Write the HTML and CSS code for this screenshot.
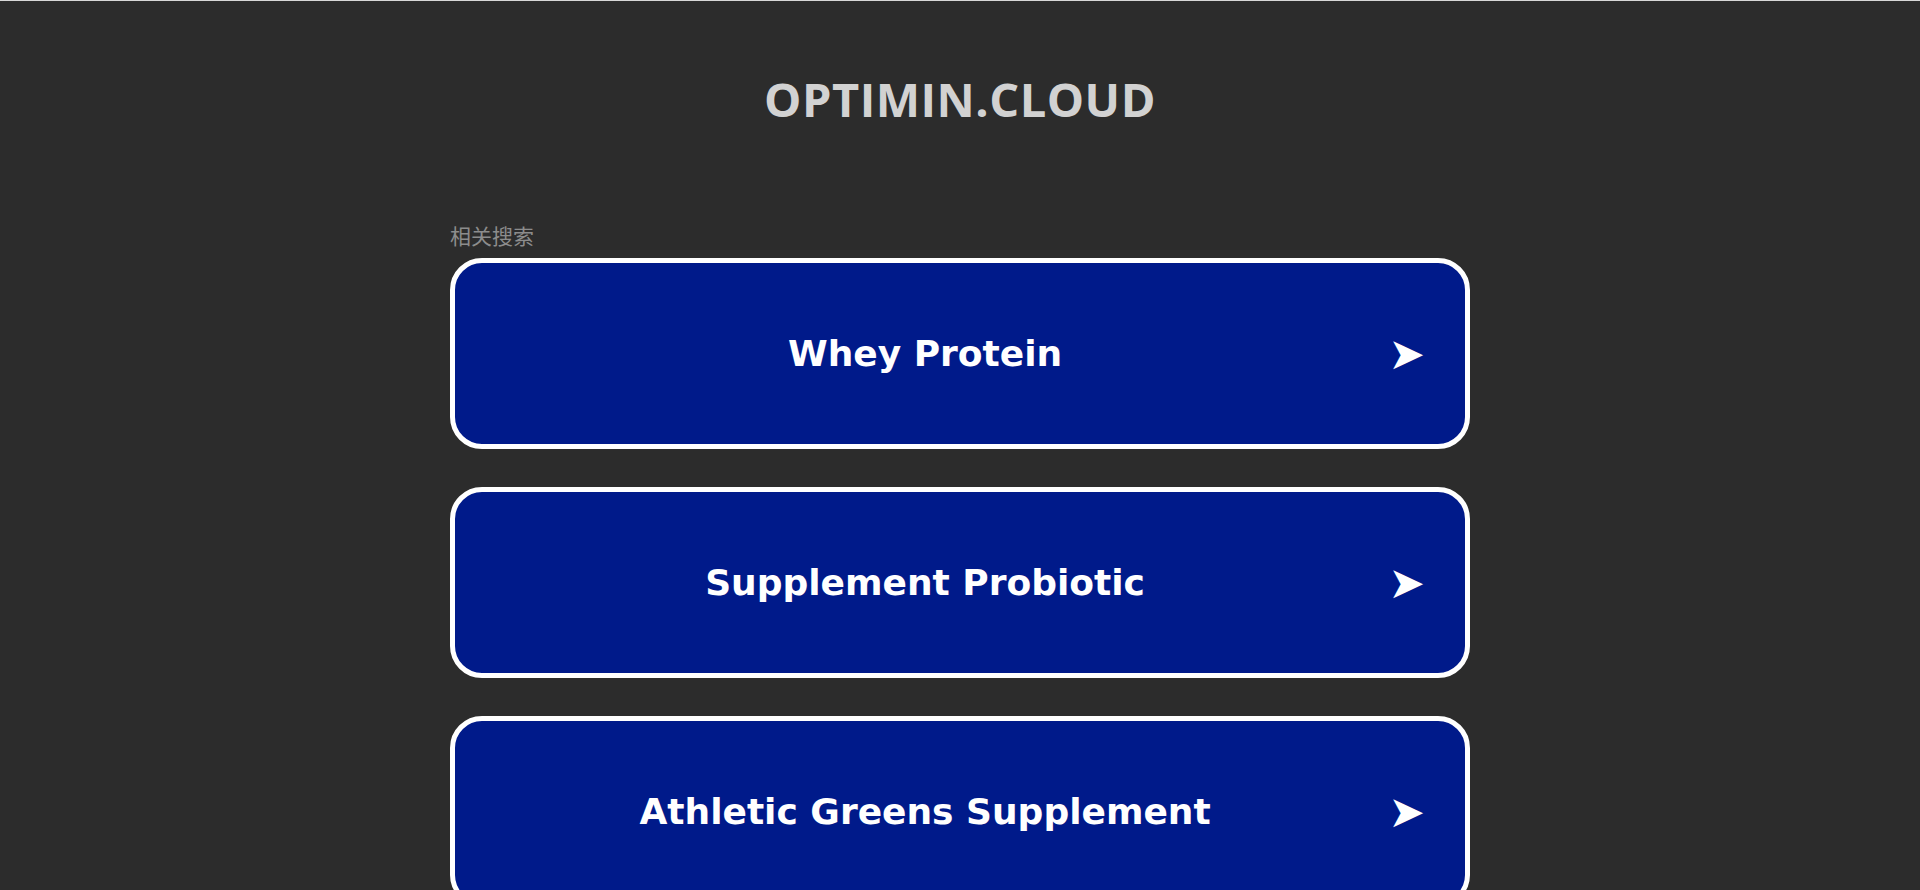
FILE: index.html
```html
<!DOCTYPE html>
<html lang="zh">
<head>
<meta charset="utf-8">
<title>optimin.cloud</title>
<link rel="stylesheet" href="styles.css">
</head>
<body>
<div class="page">
  <header class="header">
    <h1 class="title">OPTIMIN.CLOUD</h1>
  </header>
  <main class="content">
    <div class="label">相关搜索</div>
    <ul class="links">
      <li><a class="link" href="#"><span class="link-text">Whey Protein</span><span class="arrow">➤</span></a></li>
      <li><a class="link" href="#"><span class="link-text">Supplement Probiotic</span><span class="arrow">➤</span></a></li>
      <li><a class="link" href="#"><span class="link-text">Athletic Greens Supplement</span><span class="arrow">➤</span></a></li>
    </ul>
  </main>
</div>
</body>
</html>
```

FILE: styles.css
```css
html, body {
  margin: 0;
  padding: 0;
  background: #2c2c2c;
}
body {
  border-top: 1px solid #d8d8d8;
  min-height: 889px;
}
.page {
  display: flex;
  flex-direction: column;
  align-items: center;
}
.header {
  padding-top: 70px;
  height: 150px;
  box-sizing: border-box;
}
.title {
  margin: 0;
  font-family: "Open Sans", "Liberation Sans", sans-serif;
  font-weight: 700;
  font-size: 47px;
  line-height: 56px;
  color: #d2d2d2;
  letter-spacing: 0.5px;
}
.content {
  width: 1020px;
  padding-top: 70px;
}
.label {
  font-family: "Noto Sans CJK SC", "Noto Sans", sans-serif;
  font-size: 21px;
  line-height: 28px;
  color: #8c8c8c;
  margin-bottom: 9px;
}
.links {
  list-style: none;
  margin: 0;
  padding: 0;
  display: flex;
  flex-direction: column;
  gap: 38px;
}
.link {
  display: flex;
  align-items: center;
  height: 191px;
  box-sizing: border-box;
  border: 5px solid #ffffff;
  border-radius: 32px;
  background: #001a8a;
  color: #ffffff;
  text-decoration: none;
  padding: 0 40px 0 7px;
}
.link-text {
  flex: 1;
  text-align: center;
  font-family: "DejaVu Sans", Verdana, sans-serif;
  font-weight: 700;
  font-size: 36px;
}
.arrow {
  font-family: "DejaVu Sans", sans-serif;
  font-size: 44px;
  line-height: 1;
}
```
